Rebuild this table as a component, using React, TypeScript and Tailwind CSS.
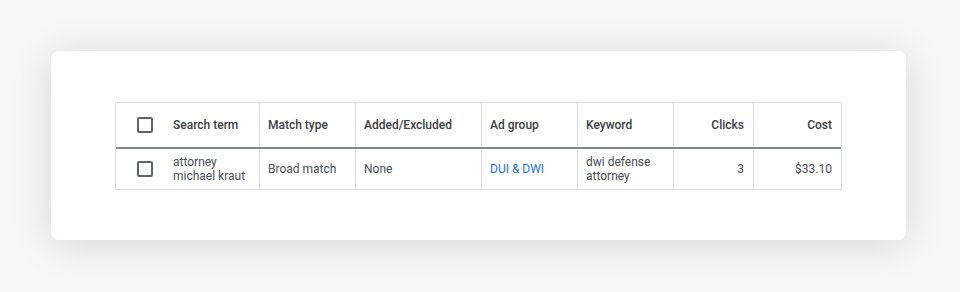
const columns = [
  { label: 'Match type', align: 'left' },
  { label: 'Added/Excluded', align: 'left' },
  { label: 'Ad group', align: 'left' },
  { label: 'Keyword', align: 'left' },
  { label: 'Clicks', align: 'right' },
  { label: 'Cost', align: 'right' },
];

function Checkbox() {
  return <span className="block w-4 h-4 border-2 border-[#5f6368] rounded-[2px] shrink-0" />;
}

export default function App() {
  const grid = 'grid grid-cols-[143px_96px_126px_96px_96px_80px_88px]';
  return (
    <div className="min-h-[292px] bg-[#f7f7f7] pl-[51px] pr-[54px] pt-[51px] font-['Roboto',sans-serif] text-[12px] text-[#3c4043]">
      <div className="bg-white rounded-[8px] h-[189px] shadow-[0_4px_40px_rgba(0,0,0,0.13)] pl-[64px] pt-[51px]">
        <div className="w-[727px] border border-[#dadce0]">
          {/* header */}
          <div className={`${grid} h-[46px] border-b-2 border-[#80868b] font-medium text-[#3c4043]`}>
            <div className="flex items-center pl-[21px] gap-5">
              <Checkbox />
              <span>Search term</span>
            </div>
            {columns.map((c) => (
              <div
                key={c.label}
                className={`flex items-center border-l border-[#dadce0] px-2 ${c.align === 'right' ? 'justify-end pr-[9px]' : ''}`}
              >
                {c.label}
              </div>
            ))}
          </div>
          {/* row */}
          <div className={`${grid} h-[40px] leading-[14px] text-[#4a4e52]`}>
            <div className="flex items-center pl-[21px] gap-5">
              <Checkbox />
              <span>attorney<br />michael kraut</span>
            </div>
            <div className="flex items-center border-l border-[#dadce0] px-2">Broad match</div>
            <div className="flex items-center border-l border-[#dadce0] px-2">None</div>
            <div className="flex items-center border-l border-[#dadce0] px-2 text-[#1a73e8]">DUI &amp; DWI</div>
            <div className="flex items-center border-l border-[#dadce0] px-2">dwi defense<br />attorney</div>
            <div className="flex items-center justify-end border-l border-[#dadce0] px-2 pr-[9px]">3</div>
            <div className="flex items-center justify-end border-l border-[#dadce0] px-2 pr-[9px]">$33.10</div>
          </div>
        </div>
      </div>
    </div>
  );
}
